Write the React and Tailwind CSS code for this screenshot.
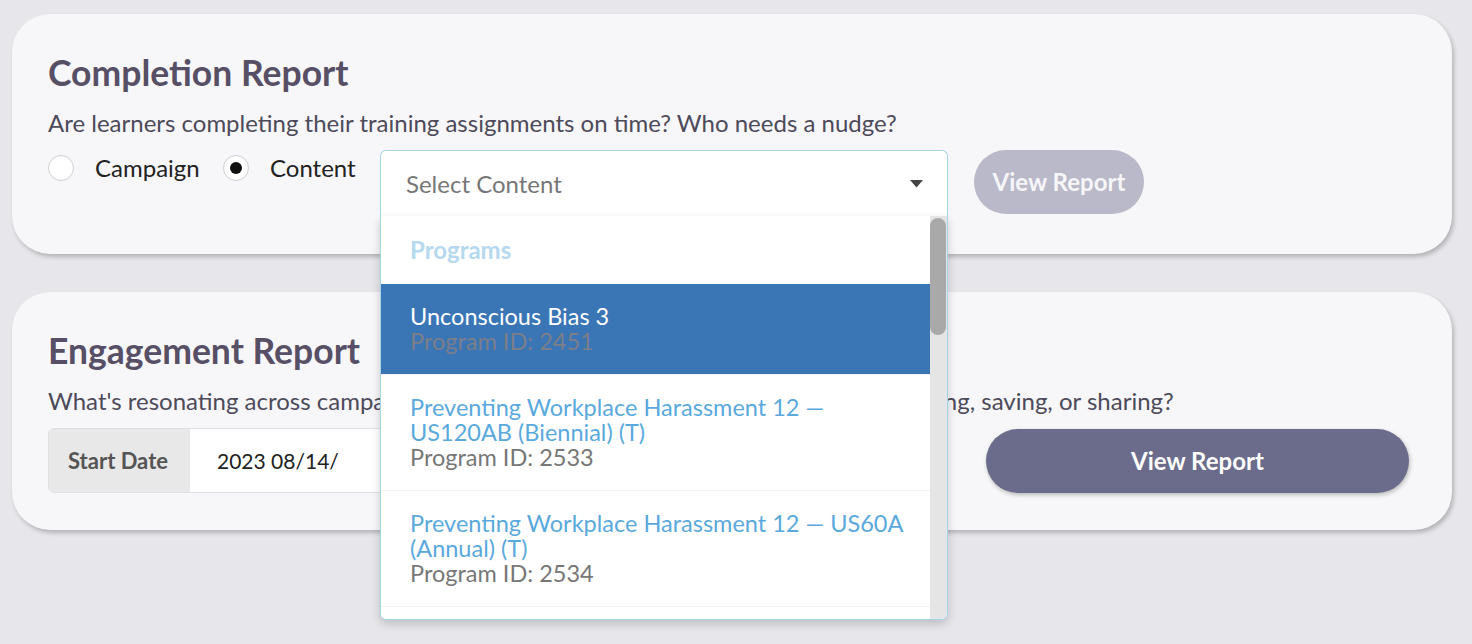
import React from 'react';
import { Calendar } from 'lucide-react';

const font = { fontFamily: '"Source Sans Pro", Lato, "Liberation Sans", sans-serif' };

function Radio({ checked, label, width }) {
  return (
    <label className={'flex items-center h-[36px] text-[24px] text-[#222] ' + width}>
      <span className="w-[26px] h-[26px] shrink-0 rounded-full bg-white border border-[#cfcfd4] flex items-center justify-center">
        {checked && <span className="w-[12px] h-[12px] rounded-full bg-[#111]" />}
      </span>
      <span className="ml-[21px]">{label}</span>
    </label>
  );
}

function ProgramItem({ title, id, active }) {
  return (
    <div
      className={
        'pl-[29px] pr-[12px] py-[20px] text-[23.5px] leading-[25px] border-b border-[#f2f2f4] ' +
        (active ? 'bg-[#3a75b5]' : 'bg-white')
      }
    >
      <div className={active ? 'text-white' : 'text-[#5aa9dd]'}>{title}</div>
      <div className={active ? 'text-[#7d7e88]' : 'text-[#777]'}>Program ID: {id}</div>
    </div>
  );
}

export default function App() {
  const programs = [
    { title: 'Unconscious Bias 3', id: 2451, active: true },
    { title: 'Preventing Workplace Harassment 12 — US120AB (Biennial) (T)', id: 2533 },
    { title: 'Preventing Workplace Harassment 12 — US60A (Annual) (T)', id: 2534 },
    { title: 'Preventing Workplace Harassment 12 — US60B (Annual) (T)', id: 2535 },
  ];

  return (
    <div className="min-h-[644px] bg-[#e7e6eb] pt-[14px] px-[12px] pb-[20px]" style={font}>
      <div className="w-[1440px] flex flex-col gap-[38px]">
        {/* Completion report */}
        <div className="relative z-10 bg-[#f7f7f9] rounded-[38px] shadow-[2px_3px_4px_rgba(0,0,0,0.22)] pl-[36px] pr-[36px] pt-[38px] pb-[38px]">
          <h2 className="text-[35.5px] leading-[42px] font-bold text-[#574f66]">Completion Report</h2>
          <p className="mt-[15px] text-[24px] leading-[28px] text-[#4d4a5a]">
            Are learners completing their training assignments on time? Who needs a nudge?
          </p>
          <div className="mt-[13px] flex items-start">
            <Radio label="Campaign" width="w-[175px]" />
            <Radio checked label="Content" width="w-[157px]" />
            <div className="relative w-[568px]">
              <div className="h-[66px] bg-white border border-b-0 border-[#a6d3e6] rounded-t-[6px] flex items-center justify-between pl-[25px] pr-[24px]">
                <span className="text-[24px] text-[#777]">Select Content</span>
                <svg width="13" height="8" viewBox="0 0 13 8">
                  <path d="M0 0 L13 0 L6.5 7.5 Z" fill="#444" />
                </svg>
              </div>
              <div className="absolute left-0 top-full w-[568px] h-[404px] bg-white border border-t-0 border-[#a6d3e6] rounded-b-[6px] shadow-[0_4px_10px_rgba(0,0,0,0.18)] flex overflow-hidden">
                <div className="flex-1 overflow-hidden">
                  <div className="h-[68px] pl-[29px] flex items-center text-[24px] font-bold text-[#b5d9ef]">
                    Programs
                  </div>
                  {programs.map((p) => (
                    <ProgramItem key={p.id} {...p} />
                  ))}
                </div>
                <div className="w-[17px] bg-[#e5e5e5] pt-[2px]">
                  <div className="w-[16px] h-[117px] rounded-full bg-[#a9a9a9]" />
                </div>
              </div>
            </div>
            <button className="ml-[26px] w-[170px] h-[64px] rounded-full bg-[#b9b9c9] text-[24px] font-bold text-[#f6f6f9]">
              View Report
            </button>
          </div>
        </div>

        {/* Engagement report */}
        <div className="bg-[#f7f7f9] rounded-[38px] shadow-[2px_3px_4px_rgba(0,0,0,0.22)] pl-[36px] pr-[36px] pt-[38px] pb-[37px]">
          <h2 className="text-[35.5px] leading-[42px] font-bold text-[#574f66]">Engagement Report</h2>
          <p className="mt-[15px] text-[24px] leading-[28px] text-[#4d4a5a]">
            What's resonating across campaigns and content? Which are learners completing, rating, saving, or sharing?
          </p>
          <div className="mt-[13px] flex items-center">
            <div className="flex h-[65px] rounded-[6px] overflow-hidden border border-[#e0e0e4]">
              <div className="w-[141px] bg-[#e8e8e8] flex items-center pl-[19px] text-[22px] font-bold text-[#555]">
                Start Date
              </div>
              <div className="w-[240px] bg-white flex items-center pl-[27px] text-[21px] text-[#222]">
                <span className="flex-1">2023 08/14/</span>
                <Calendar size={18} className="text-[#222] mr-[10px]" />
              </div>
            </div>
            <div className="ml-[20px] flex h-[65px] rounded-[6px] overflow-hidden border border-[#e0e0e4]">
              <div className="w-[130px] bg-[#e8e8e8] flex items-center pl-[19px] text-[22px] font-bold text-[#555]">
                End Date
              </div>
              <div className="w-[190px] bg-white flex items-center pl-[20px] text-[21px] text-[#222]">
                2023 09/14/
              </div>
            </div>
            <button className="ml-auto mr-[7px] w-[423px] h-[64px] rounded-full bg-[#6b6c8b] text-[24px] font-bold text-white shadow-[1px_2px_4px_rgba(0,0,0,0.25)]">
              View Report
            </button>
          </div>
        </div>
      </div>
    </div>
  );
}
